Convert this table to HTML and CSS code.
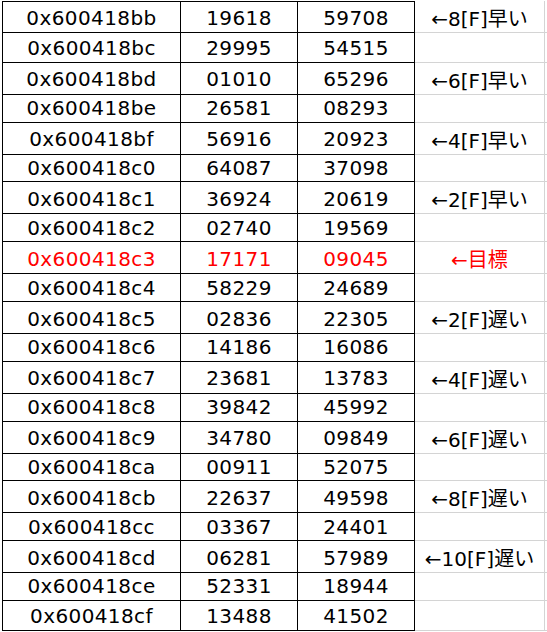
FILE: index.html
```html
<!DOCTYPE html>
<html lang="ja">
<head>
<meta charset="utf-8">
<title>table</title>
<link rel="stylesheet" href="styles.css">
</head>
<body>
<div class="sheet">
  <div class="row first"><div class="c a">0x600418bb</div><div class="c b">19618</div><div class="c b">59708</div><div class="c n">←8[F]早い</div><div class="c e"></div></div>
  <div class="row"><div class="c a">0x600418bc</div><div class="c b">29995</div><div class="c b">54515</div><div class="c n"></div><div class="c e"></div></div>
  <div class="row"><div class="c a">0x600418bd</div><div class="c b">01010</div><div class="c b">65296</div><div class="c n">←6[F]早い</div><div class="c e"></div></div>
  <div class="row"><div class="c a">0x600418be</div><div class="c b">26581</div><div class="c b">08293</div><div class="c n"></div><div class="c e"></div></div>
  <div class="row"><div class="c a">0x600418bf</div><div class="c b">56916</div><div class="c b">20923</div><div class="c n">←4[F]早い</div><div class="c e"></div></div>
  <div class="row"><div class="c a">0x600418c0</div><div class="c b">64087</div><div class="c b">37098</div><div class="c n"></div><div class="c e"></div></div>
  <div class="row"><div class="c a">0x600418c1</div><div class="c b">36924</div><div class="c b">20619</div><div class="c n">←2[F]早い</div><div class="c e"></div></div>
  <div class="row"><div class="c a">0x600418c2</div><div class="c b">02740</div><div class="c b">19569</div><div class="c n"></div><div class="c e"></div></div>
  <div class="row target"><div class="c a">0x600418c3</div><div class="c b">17171</div><div class="c b">09045</div><div class="c n">←目標</div><div class="c e"></div></div>
  <div class="row"><div class="c a">0x600418c4</div><div class="c b">58229</div><div class="c b">24689</div><div class="c n"></div><div class="c e"></div></div>
  <div class="row"><div class="c a">0x600418c5</div><div class="c b">02836</div><div class="c b">22305</div><div class="c n">←2[F]遅い</div><div class="c e"></div></div>
  <div class="row"><div class="c a">0x600418c6</div><div class="c b">14186</div><div class="c b">16086</div><div class="c n"></div><div class="c e"></div></div>
  <div class="row"><div class="c a">0x600418c7</div><div class="c b">23681</div><div class="c b">13783</div><div class="c n">←4[F]遅い</div><div class="c e"></div></div>
  <div class="row"><div class="c a">0x600418c8</div><div class="c b">39842</div><div class="c b">45992</div><div class="c n"></div><div class="c e"></div></div>
  <div class="row"><div class="c a">0x600418c9</div><div class="c b">34780</div><div class="c b">09849</div><div class="c n">←6[F]遅い</div><div class="c e"></div></div>
  <div class="row"><div class="c a">0x600418ca</div><div class="c b">00911</div><div class="c b">52075</div><div class="c n"></div><div class="c e"></div></div>
  <div class="row"><div class="c a">0x600418cb</div><div class="c b">22637</div><div class="c b">49598</div><div class="c n">←8[F]遅い</div><div class="c e"></div></div>
  <div class="row"><div class="c a">0x600418cc</div><div class="c b">03367</div><div class="c b">24401</div><div class="c n"></div><div class="c e"></div></div>
  <div class="row"><div class="c a">0x600418cd</div><div class="c b">06281</div><div class="c b">57989</div><div class="c n">←10[F]遅い</div><div class="c e"></div></div>
  <div class="row"><div class="c a">0x600418ce</div><div class="c b">52331</div><div class="c b">18944</div><div class="c n"></div><div class="c e"></div></div>
  <div class="row"><div class="c a">0x600418cf</div><div class="c b">13488</div><div class="c b">41502</div><div class="c n"></div><div class="c e"></div></div>
</div>
</body>
</html>
```
FILE: styles.css
```css
html, body {
  margin: 0;
  padding: 0;
  background: #ffffff;
}
body {
  width: 547px;
  height: 632px;
  overflow: hidden;
}
.sheet {
  display: flex;
  flex-direction: column;
  margin: 1px 0 0 2px;
  font-family: "DejaVu Sans", "Noto Sans CJK JP", sans-serif;
  font-size: 20px;
  color: #000000;
}
.row {
  display: grid;
  grid-template-columns: 179px 117px 117px 130px 10px;
  height: 29.9px;
  flex: none;
}
.row.first {
  height: 32px;
}
.c {
  box-sizing: border-box;
  display: flex;
  align-items: center;
  justify-content: center;
  white-space: nowrap;
  padding-top: 2px;
  border-bottom: 1px solid #000000;
}
.first .a, .first .b {
  border-top: 1px solid #000000;
}
.a {
  border-left: 1px solid #000000;
  border-right: 1px solid #000000;
  letter-spacing: 0.4px;
}
.b {
  border-right: 1px solid #000000;
  letter-spacing: 0.4px;
}
.n {
  border-right: 1px solid #d4d4d4;
  border-bottom-color: #d4d4d4;
}
.e {
  border-bottom-color: #d4d4d4;
}
.target .c {
  color: #ff0000;
}
```
